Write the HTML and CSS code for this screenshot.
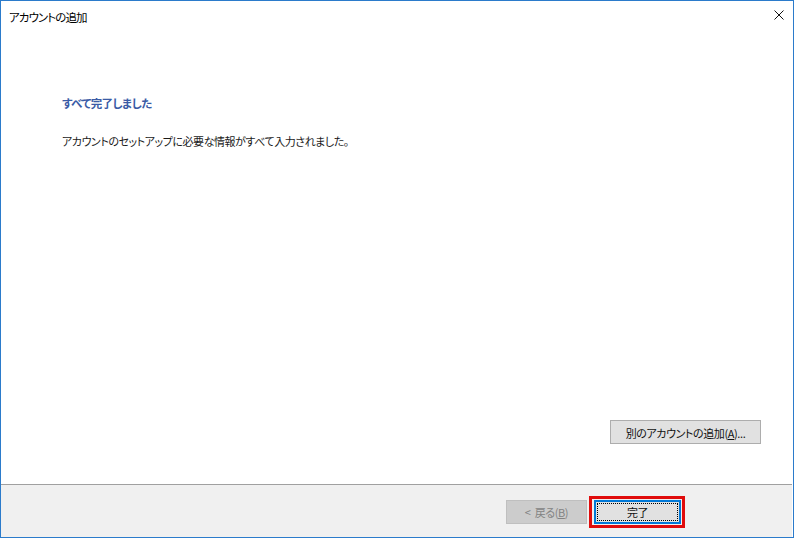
FILE: index.html
```html
<!DOCTYPE html>
<html lang="ja">
<head>
<meta charset="utf-8">
<title>アカウントの追加</title>
<link rel="stylesheet" href="styles.css">
</head>
<body>
<div class="window">
  <div class="titlebar">
    <span class="title">アカウントの追加</span>
    <svg class="close" width="10" height="10" viewBox="0 0 10 10"><path d="M0.5 0.5 L9.5 9.5 M9.5 0.5 L0.5 9.5" stroke="#111" stroke-width="1" fill="none"/></svg>
  </div>
  <div class="main">
    <h1 class="heading">すべて完了しました</h1>
    <p class="message">アカウントのセットアップに必要な情報がすべて入力されました。</p>
    <div class="add-row">
      <button class="btn add-btn">別のアカウントの追加(<u>A</u>)...</button>
    </div>
  </div>
  <div class="footer">
    <button class="btn btn-disabled back-btn">&lt;&nbsp; 戻る(<u>B</u>)</button>
    <div class="highlight">
      <button class="btn btn-default finish-btn"><span class="focus">完了</span></button>
    </div>
  </div>
</div>
</body>
</html>
```

FILE: styles.css
```css
html, body {
  margin: 0;
  padding: 0;
  background: #ffffff;
}

body {
  font-family: "Noto Sans CJK JP", "Noto Sans", sans-serif;
  font-size: 11px;
  letter-spacing: -0.45px;
  font-feature-settings: "palt";
  color: #111;
}

.window {
  box-sizing: border-box;
  width: 794px;
  height: 538px;
  border: 1px solid #2b7bcb;
  display: flex;
  flex-direction: column;
  background: #ffffff;
}

.titlebar {
  height: 31px;
  flex: 0 0 31px;
  display: flex;
  justify-content: space-between;
  align-items: flex-start;
  padding: 0 9px 0 8px;
}

.title {
  margin-top: 8px;
  font-size: 11.5px;
  letter-spacing: -0.9px;
  line-height: 16px;
  color: #000;
}

.close {
  margin-top: 9px;
  display: block;
}

.main {
  flex: 1;
  display: flex;
  flex-direction: column;
  padding: 63px 32px 40px 61px;
}

.heading {
  margin: 0;
  font-size: 11.5px;
  letter-spacing: -0.6px;
  line-height: 16px;
  font-weight: bold;
  color: #3a5ba6;
}

.message {
  margin: 22px 0 0 0;
  font-size: 11px;
  line-height: 16px;
  color: #1a1a1a;
}

.add-row {
  margin-top: auto;
  display: flex;
  justify-content: flex-end;
}

.btn {
  font-family: inherit;
  font-size: 11px;
  letter-spacing: -0.4px;
  font-feature-settings: "palt";
  white-space: nowrap;
  height: 24px;
  padding: 0 2px;
  margin: 0;
  box-sizing: border-box;
  background: #e1e1e1;
  border: 1px solid #adadad;
  color: #111;
  line-height: 20px;
}

.add-btn {
  width: 151px;
  padding-top: 1px;
}

.footer {
  flex: 0 0 53px;
  height: 53px;
  box-sizing: border-box;
  border-top: 1px solid #a0a0a0;
  background: #f0f0f0;
  display: flex;
  justify-content: flex-end;
  align-items: flex-start;
  padding: 11px 107px 0 0;
  margin-right: 1px;
}

.btn-disabled {
  background: #cccccc;
  border-color: #bfbfbf;
  color: #838383;
}

.back-btn {
  width: 81px;
  margin-top: 4px;
  margin-right: 2px;
}

.highlight {
  border: 3px solid #e00c0c;
  padding: 1px 1px 1px 2px;
}

.btn-default {
  border: 1px solid #0078d7;
  box-shadow: inset 0 0 0 1px #0078d7;
  padding: 2px;
  width: 87px;
}

.focus {
  display: block;
  height: 18px;
  line-height: 16px;
  box-sizing: border-box;
  border: 1px dotted #000;
}
```
